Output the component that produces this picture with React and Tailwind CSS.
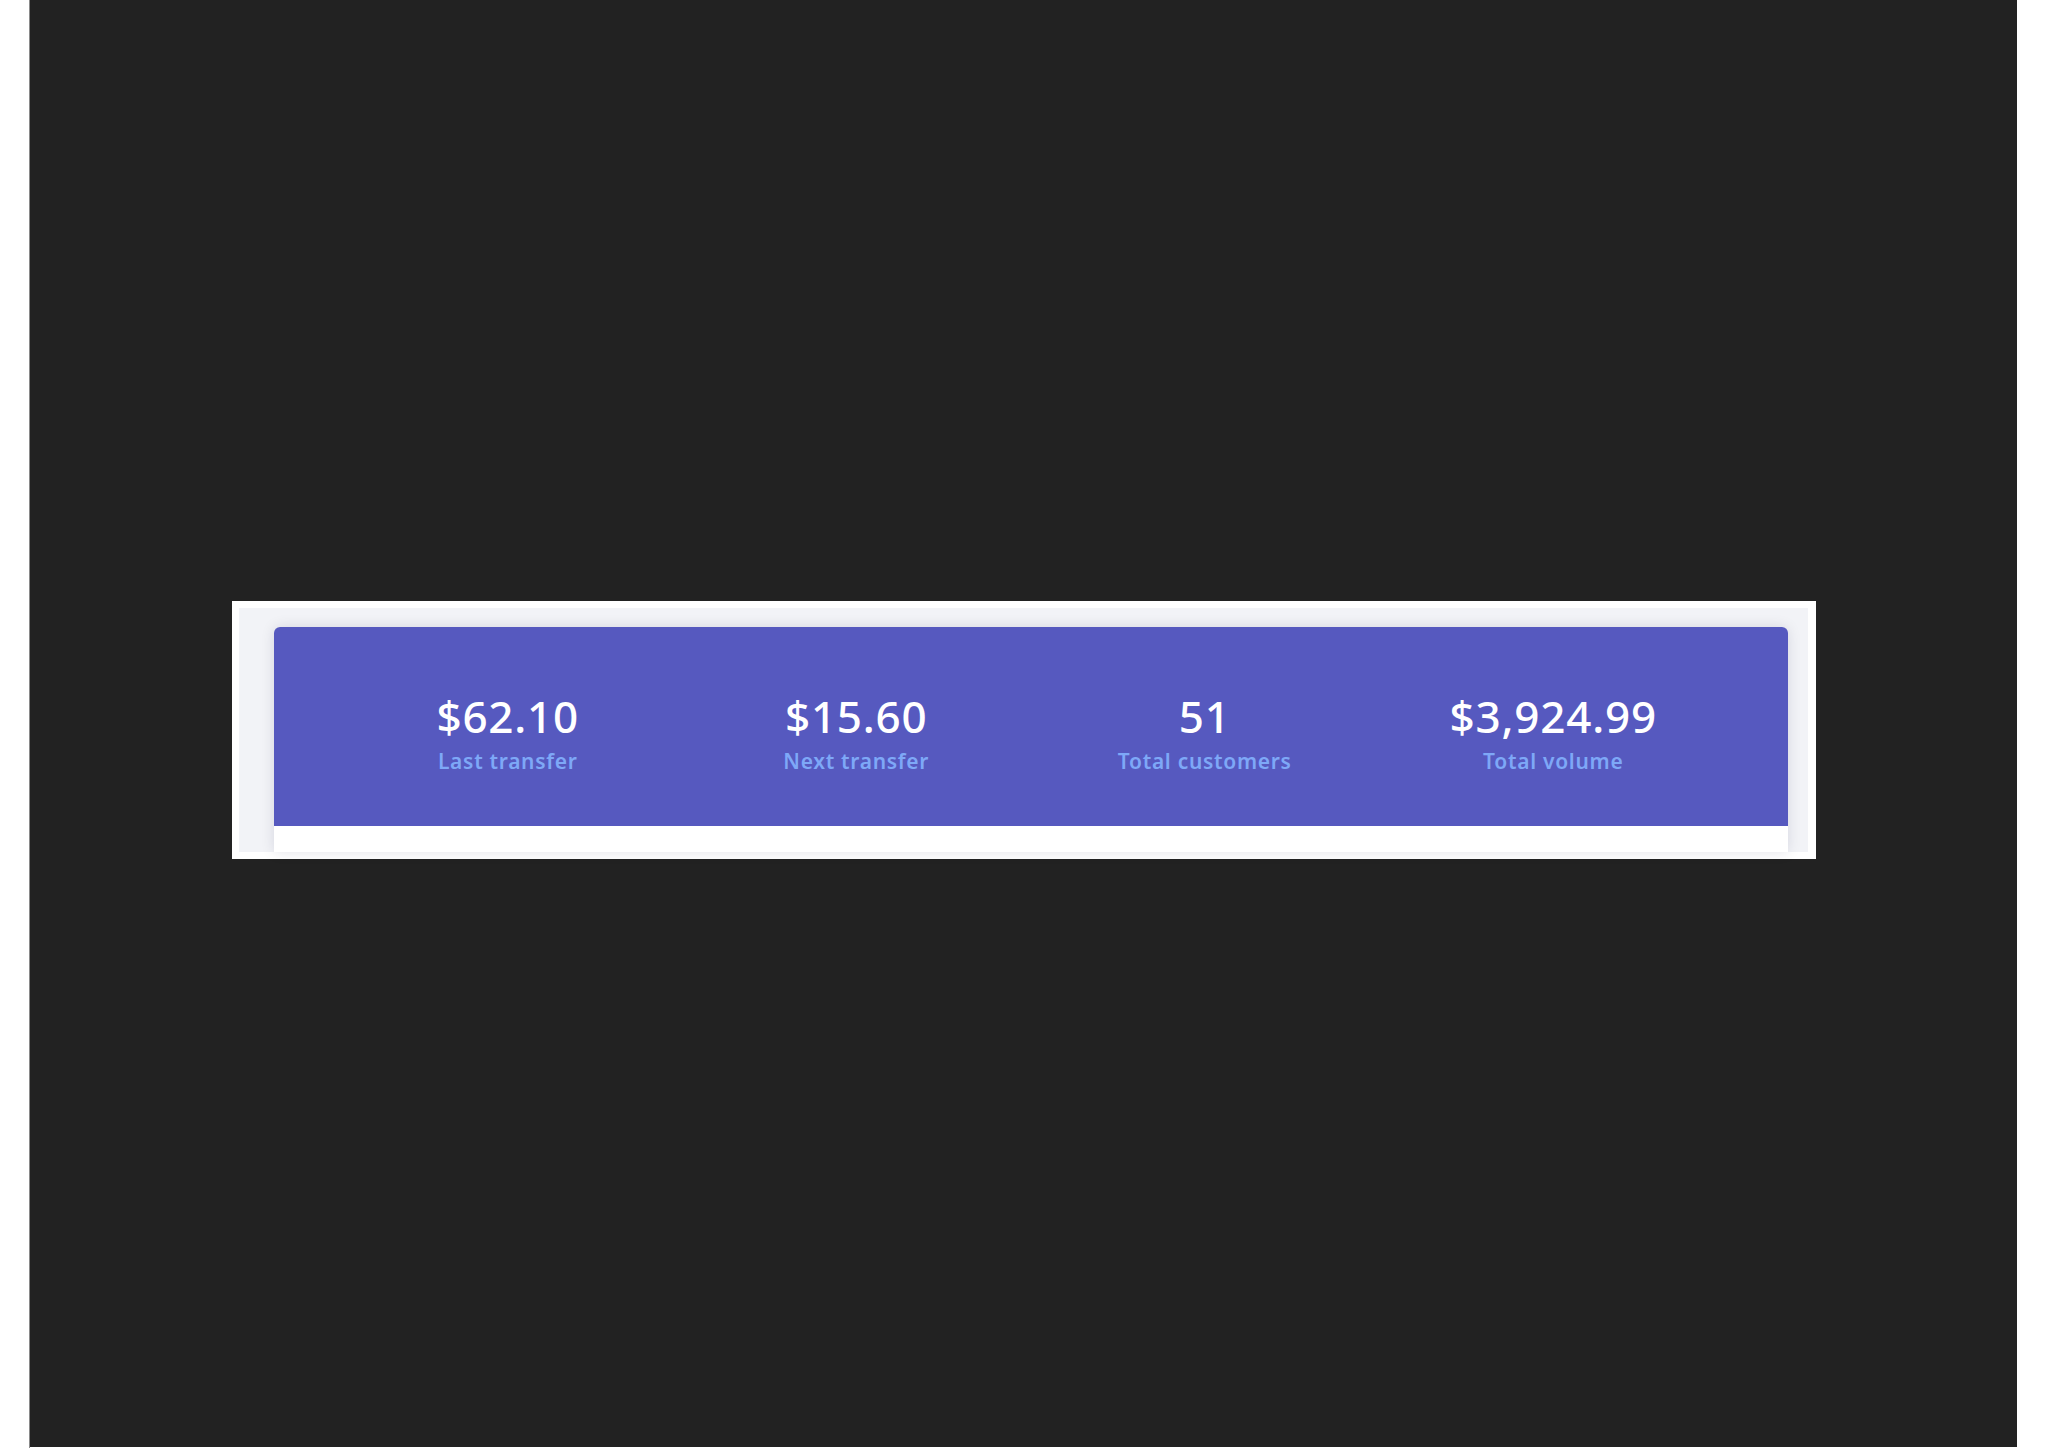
import React from 'react';

const stats = [
    { value: '$62.10', label: 'Last transfer' },
    { value: '$15.60', label: 'Next transfer' },
    { value: '51', label: 'Total customers' },
    { value: '$3,924.99', label: 'Total volume' },
];

const App = () => {
    return (
        <div className="flex h-[1448px] w-[2048px] bg-white" style={{ fontFamily: '"Noto Sans", "Open Sans", sans-serif' }}>
            <div className="w-[30px] border-r border-[#8a8a8a]" />
            <div className="flex flex-1 justify-center bg-[#222222] pt-[601px] mb-px">
                <div className="h-[258px] w-[1584px] bg-white p-[7px] pr-[8px]">
                    <div className="h-[244px] bg-[#f2f3f7] pl-[35px] pr-[20px] pt-[19px]">
                        <div className="h-[225px] overflow-hidden rounded-t-[6px] bg-white shadow-[0_0_14px_rgba(20,20,60,0.12)]">
                            {/* Stats bar */}
                            <div className="grid h-[199px] grid-cols-4 bg-[#5659bf] px-[60px] pt-[65px]">
                                {stats.map((s) => (
                                    <div key={s.label} className="flex flex-col items-center">
                                        <span className="text-[44px] font-medium leading-[48px] tracking-[0.8px] text-white">
                                            {s.value}
                                        </span>
                                        <span className="mt-[8px] text-[21px] font-semibold leading-[26px] tracking-[0.7px] text-[#7ea8f7]">
                                            {s.label}
                                        </span>
                                    </div>
                                ))}
                            </div>
                        </div>
                    </div>
                </div>
            </div>
            <div className="w-[31px]" />
        </div>
    );
};

export default App;
